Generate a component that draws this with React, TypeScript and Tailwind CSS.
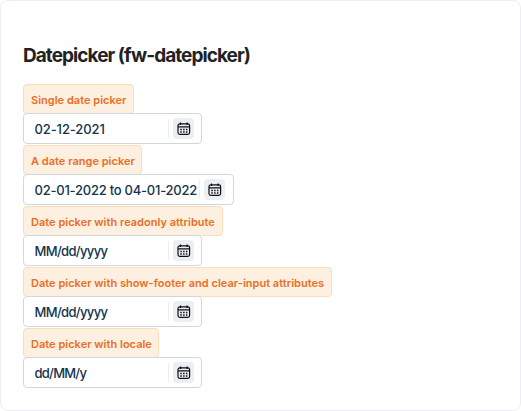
import React from "react";

function CalendarIcon() {
  return (
    <svg width="14" height="14" viewBox="0 0 14 14" fill="none" stroke="#0d0f12">
      <rect x="1" y="1.8" width="11.6" height="10.6" rx="1.8" strokeWidth="1.2" />
      <path d="M1 4.8h11.6" strokeWidth="1.3" />
      <path d="M3.5 0.5v2.4M10.1 0.5v2.4" strokeWidth="1.3" />
      <path d="M3.3 7.5h1.5M6.1 7.5h1.5M8.9 7.5h1.5M3.3 9.9h1.5M6.1 9.9h1.5M8.9 9.9h1.5" strokeWidth="1.5" />
    </svg>
  );
}

type FieldProps = {
  label: string;
  value: string;
  labelWidth: string;
  tracking: string;
  wide?: boolean;
};

function Field({ label, value, labelWidth, tracking, wide }: FieldProps) {
  return (
    <div className="flex h-[61px] flex-col items-start">
      <div
        className={`flex h-[30px] shrink-0 items-center whitespace-nowrap rounded-[4px] border border-[#fddcb8] bg-[#fef0e1] pl-[7px] pt-[2px] text-[11px] font-semibold tracking-[0.02px] text-[#e86f25] ${labelWidth}`}
      >
        {label}
      </div>
      <div
        className={`-mt-px flex h-[31px] shrink-0 items-center rounded-[4px] border border-[#cfd7df] bg-white pl-[10.5px] ${wide ? "w-[211px] pr-[8px]" : "w-[179px] pr-[7px]"}`}
      >
        <div className={`min-w-0 flex-1 overflow-hidden whitespace-nowrap text-[13px] font-medium leading-5 text-[#12344d] ${tracking}`}>
          {value}
        </div>
        <div className="h-[19px] w-px shrink-0 bg-[#ebeff3]" />
        <div className="ml-1 flex h-[21px] w-[21px] shrink-0 items-center justify-center rounded-[4px] bg-[#ebeff3]">
          <CalendarIcon />
        </div>
      </div>
    </div>
  );
}

export default function App() {
  return (
    <main className="h-[411px] w-[521px] overflow-hidden rounded-[8px] border border-[#ebeff3] bg-white pl-[22px] pt-[41px] font-['Inter',sans-serif]">
      <h1 className="h-[42px] whitespace-nowrap text-[19px] font-bold leading-7 tracking-[-0.95px] text-[#222222]">
        Datepicker (fw-datepicker)
      </h1>
      <Field label="Single date picker" value="02-12-2021" labelWidth="w-[111px]" tracking="tracking-[-0.1px]" />
      <Field label="A date range picker" value="02-01-2022 to 04-01-2022" labelWidth="w-[119px]" tracking="tracking-[-0.23px]" wide />
      <Field label="Date picker with readonly attribute" value="MM/dd/yyyy" labelWidth="w-[200px]" tracking="tracking-[-0.65px]" />
      <Field label="Date picker with show-footer and clear-input attributes" value="MM/dd/yyyy" labelWidth="w-[309px]" tracking="tracking-[-0.65px]" />
      <Field label="Date picker with locale" value="dd/MM/y" labelWidth="w-[136px]" tracking="tracking-[-0.75px]" />
    </main>
  );
}
